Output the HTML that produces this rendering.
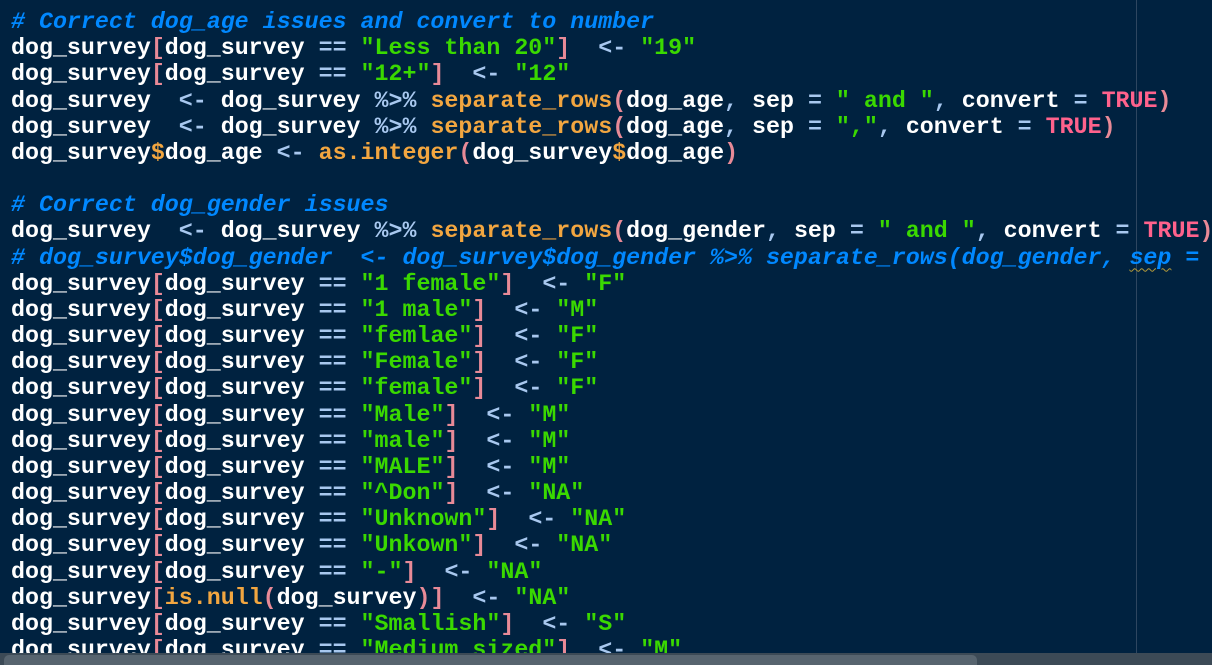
<!DOCTYPE html>
<html><head><meta charset="utf-8"><style>
html,body{margin:0;padding:0;width:1212px;height:665px;overflow:hidden;background:#002240;}
pre{position:absolute;left:11px;top:9px;margin:0;font-family:"Liberation Mono",monospace;font-size:23.3px;font-weight:bold;line-height:26.17px;color:#ffffff;white-space:pre;}
.c{color:#0088ff;font-style:italic}
.o{color:#a8c8ef}
.b{color:#e88a97}
.s{color:#3ad900}
.t{color:#ff628c}
.f{color:#f2a640}
.margin{position:absolute;left:1136px;top:0;width:1px;height:665px;background:#2e4660}
.sb{position:absolute;left:0;top:653px;width:1212px;height:12px;background:#3c4a56}
.th{position:absolute;left:4px;top:655px;width:973px;height:10px;background:#57646f;border-radius:5px 5px 0 0}
.w{text-decoration:underline wavy #b59a3a;text-decoration-thickness:1px;text-underline-offset:4px}
</style></head><body>
<div class="margin"></div>
<pre><span class="c"># Correct dog_age issues and convert to number</span>
dog_survey<span class="b">[</span>dog_survey <span class="o">==</span> <span class="s">"Less than 20"</span><span class="b">]</span>  <span class="o">&lt;-</span> <span class="s">"19"</span>
dog_survey<span class="b">[</span>dog_survey <span class="o">==</span> <span class="s">"12+"</span><span class="b">]</span>  <span class="o">&lt;-</span> <span class="s">"12"</span>
dog_survey  <span class="o">&lt;-</span> dog_survey <span class="o">%&gt;%</span> <span class="f">separate_rows</span><span class="b">(</span>dog_age<span class="o">,</span> sep <span class="o">=</span> <span class="s">" and "</span><span class="o">,</span> convert <span class="o">=</span> <span class="t">TRUE</span><span class="b">)</span>
dog_survey  <span class="o">&lt;-</span> dog_survey <span class="o">%&gt;%</span> <span class="f">separate_rows</span><span class="b">(</span>dog_age<span class="o">,</span> sep <span class="o">=</span> <span class="s">","</span><span class="o">,</span> convert <span class="o">=</span> <span class="t">TRUE</span><span class="b">)</span>
dog_survey<span class="f">$</span>dog_age <span class="o">&lt;-</span> <span class="f">as.integer</span><span class="b">(</span>dog_survey<span class="f">$</span>dog_age<span class="b">)</span>

<span class="c"># Correct dog_gender issues</span>
dog_survey  <span class="o">&lt;-</span> dog_survey <span class="o">%&gt;%</span> <span class="f">separate_rows</span><span class="b">(</span>dog_gender<span class="o">,</span> sep <span class="o">=</span> <span class="s">" and "</span><span class="o">,</span> convert <span class="o">=</span> <span class="t">TRUE</span><span class="b">)</span>
<span class="c"># dog_survey$dog_gender  &lt;- dog_survey$dog_gender %&gt;% separate_rows(dog_gender, <span class="w">sep</span> = </span>
dog_survey<span class="b">[</span>dog_survey <span class="o">==</span> <span class="s">"1 female"</span><span class="b">]</span>  <span class="o">&lt;-</span> <span class="s">"F"</span>
dog_survey<span class="b">[</span>dog_survey <span class="o">==</span> <span class="s">"1 male"</span><span class="b">]</span>  <span class="o">&lt;-</span> <span class="s">"M"</span>
dog_survey<span class="b">[</span>dog_survey <span class="o">==</span> <span class="s">"femlae"</span><span class="b">]</span>  <span class="o">&lt;-</span> <span class="s">"F"</span>
dog_survey<span class="b">[</span>dog_survey <span class="o">==</span> <span class="s">"Female"</span><span class="b">]</span>  <span class="o">&lt;-</span> <span class="s">"F"</span>
dog_survey<span class="b">[</span>dog_survey <span class="o">==</span> <span class="s">"female"</span><span class="b">]</span>  <span class="o">&lt;-</span> <span class="s">"F"</span>
dog_survey<span class="b">[</span>dog_survey <span class="o">==</span> <span class="s">"Male"</span><span class="b">]</span>  <span class="o">&lt;-</span> <span class="s">"M"</span>
dog_survey<span class="b">[</span>dog_survey <span class="o">==</span> <span class="s">"male"</span><span class="b">]</span>  <span class="o">&lt;-</span> <span class="s">"M"</span>
dog_survey<span class="b">[</span>dog_survey <span class="o">==</span> <span class="s">"MALE"</span><span class="b">]</span>  <span class="o">&lt;-</span> <span class="s">"M"</span>
dog_survey<span class="b">[</span>dog_survey <span class="o">==</span> <span class="s">"^Don"</span><span class="b">]</span>  <span class="o">&lt;-</span> <span class="s">"NA"</span>
dog_survey<span class="b">[</span>dog_survey <span class="o">==</span> <span class="s">"Unknown"</span><span class="b">]</span>  <span class="o">&lt;-</span> <span class="s">"NA"</span>
dog_survey<span class="b">[</span>dog_survey <span class="o">==</span> <span class="s">"Unkown"</span><span class="b">]</span>  <span class="o">&lt;-</span> <span class="s">"NA"</span>
dog_survey<span class="b">[</span>dog_survey <span class="o">==</span> <span class="s">"-"</span><span class="b">]</span>  <span class="o">&lt;-</span> <span class="s">"NA"</span>
dog_survey<span class="b">[</span><span class="f">is.null</span><span class="b">(</span>dog_survey<span class="b">)</span><span class="b">]</span>  <span class="o">&lt;-</span> <span class="s">"NA"</span>
dog_survey<span class="b">[</span>dog_survey <span class="o">==</span> <span class="s">"Smallish"</span><span class="b">]</span>  <span class="o">&lt;-</span> <span class="s">"S"</span>
dog_survey<span class="b">[</span>dog_survey <span class="o">==</span> <span class="s">"Medium sized"</span><span class="b">]</span>  <span class="o">&lt;-</span> <span class="s">"M"</span></pre>
<div class="sb"></div><div class="th"></div>
</body></html>
